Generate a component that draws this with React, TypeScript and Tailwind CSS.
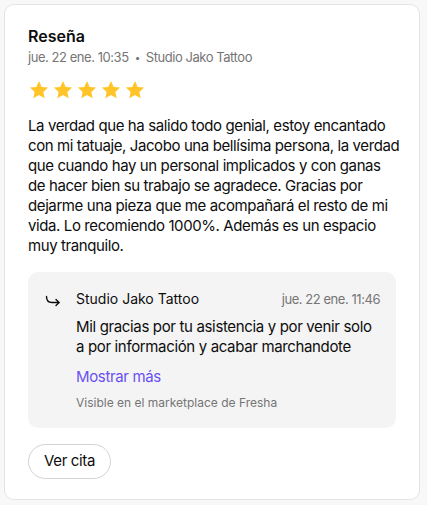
import React from "react";

const Star = () => (
  <svg width="22" height="22" viewBox="0 0 24 24" fill="#FFC428">
    <path d="M12 2.2l2.95 6.4 7 .75-5.22 4.73 1.45 6.9L12 17.45l-6.18 3.53 1.45-6.9L2.05 9.35l7-.75z" />
  </svg>
);

const reviewLines = [
  "La verdad que ha salido todo genial, estoy encantado",
  "con mi tatuaje, Jacobo una bellísima persona, la verdad",
  "que cuando hay un personal implicados y con ganas",
  "de hacer bien su trabajo se agradece. Gracias por",
  "dejarme una pieza que me acompañará el resto de mi",
  "vida. Lo recomiendo 1000%. Además es un espacio",
  "muy tranquilo.",
];

export default function App() {
  return (
    <div className="min-h-[505px] w-[427px] bg-[#f8f8f8] p-[4px] pr-[7px]" style={{ fontFamily: "Inter, 'Noto Sans', sans-serif" }}>
      <div className="rounded-[10px] border border-[#e4e4e4] bg-white px-[23px] pt-[19px] pb-[20px]">
        <div className="text-[16px] leading-[24px] font-semibold text-[#0d0d0d]">Reseña</div>
        <div className="flex items-center gap-[6px] text-[13px] leading-[18px] tracking-[-0.45px] text-[#757575]">
          <span>jue. 22 ene. 10:35</span>
          <span className="text-[10px]">•</span>
          <span>Studio Jako Tattoo</span>
        </div>
        <div className="mt-[13px] flex gap-[2px]">
          <Star />
          <Star />
          <Star />
          <Star />
          <Star />
        </div>
        <p className="mt-[15px] text-[15px] leading-[20px] tracking-[-0.4px] text-[#0d0d0d]">
          {reviewLines.map((l) => (
            <span key={l} className="block whitespace-nowrap">{l}</span>
          ))}
        </p>
        <div className="mt-[16px] flex gap-[14px] rounded-[10px] bg-[#f4f4f4] pt-[17px] pb-[16px] pr-[16px] pl-[16px]">
          <svg width="18" height="18" viewBox="0 0 18 18" fill="none" stroke="#0d0d0d" strokeWidth="1.4" strokeLinecap="round" strokeLinejoin="round" className="mt-[3px] shrink-0">
            <path d="M2.5 4.5c0 3.5 2 6 5.5 6h7" />
            <path d="M12 7.5l3 3-3 3" />
          </svg>
          <div className="flex-1">
            <div className="flex items-center justify-between">
              <span className="text-[14px] leading-[20px] text-[#0d0d0d]">Studio Jako Tattoo</span>
              <span className="text-[13px] leading-[20px] tracking-[-0.45px] text-[#757575]">jue. 22 ene. 11:46</span>
            </div>
            <p className="mt-[8px] text-[15px] leading-[20px] tracking-[-0.35px] text-[#0d0d0d]">
              Mil gracias por tu asistencia y por venir solo a por información y acabar marchandote
            </p>
            <div className="mt-[9px] text-[15px] leading-[22px] tracking-[-0.35px] text-[#6950f3]">Mostrar más</div>
            <div className="mt-[6px] text-[12px] leading-[18px] text-[#757575]">Visible en el marketplace de Fresha</div>
          </div>
        </div>
        <button className="mt-[16px] h-[35px] rounded-full border border-[#d3d3d3] px-[15px] text-[15px] tracking-[-0.35px] text-[#0d0d0d]">Ver cita</button>
      </div>
    </div>
  );
}
